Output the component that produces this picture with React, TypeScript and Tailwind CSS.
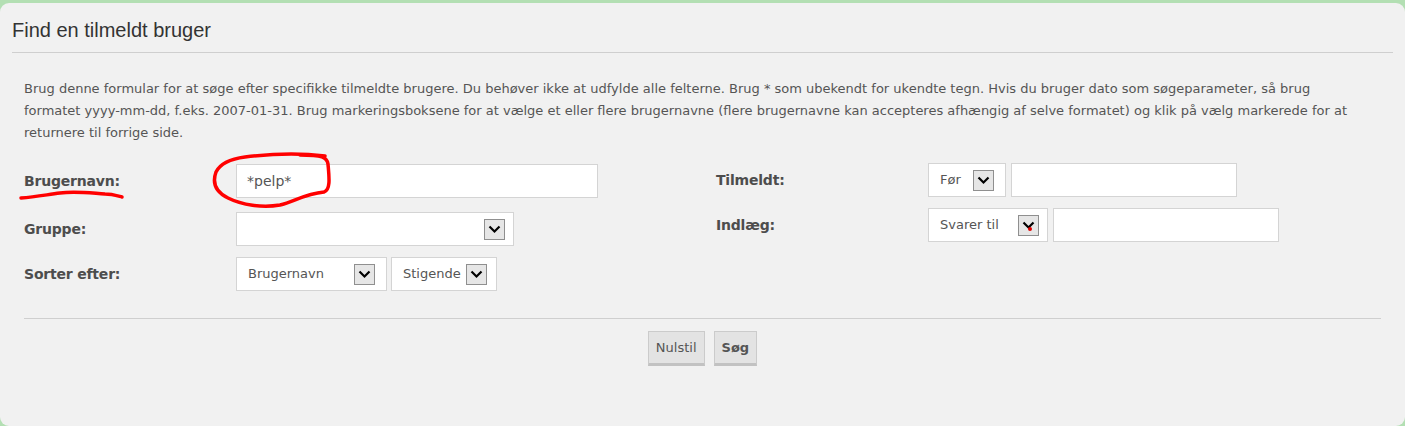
import React from "react";

const Chevron: React.FC<{ dot?: boolean }> = ({ dot }) => (
  <span className="relative flex h-[21px] w-[21px] items-center justify-center border border-[#8f8f8f] bg-[#e6e6e6]">
    <svg width="13" height="9" viewBox="0 0 13 9">
      <polyline points="1.5,1.5 6.5,6.5 11.5,1.5" fill="none" stroke="#000" strokeWidth="2.2" />
    </svg>
    {dot && <span className="absolute left-[9px] top-[11px] h-[4px] w-[4px] rounded-full bg-[#e00000]" />}
  </span>
);

const Select: React.FC<{ value: string; width: string; dot?: boolean; pr?: string }> = ({
  value,
  width,
  dot,
  pr = "pr-[11px]",
}) => (
  <div className={`flex h-[34px] items-center justify-between border border-[#d4d4d4] bg-white pl-[11px] ${pr} ${width}`}>
    <span>{value}</span>
    <Chevron dot={dot} />
  </div>
);

const Label: React.FC<{ children: React.ReactNode }> = ({ children }) => (
  <span className="w-[212px] shrink-0 text-[14px] font-bold tracking-[-0.2px] text-[#4d4d4d]">{children}</span>
);

export default function App() {
  return (
    <div
      className="relative h-[426px] w-full overflow-hidden bg-[#b3dfb3] pt-[3px] text-[13px] text-[#555]"
      style={{ fontFamily: '"DejaVu Sans", Verdana, sans-serif' }}
    >
      <div className="h-[423px] rounded-[9px] bg-[#f1f1f1] px-[12px]">
        <h1
          className="pt-[16px] pb-[10px] text-[20px] leading-[23px] text-[#333]"
          style={{ fontFamily: '"Liberation Sans", Arial, sans-serif' }}
        >
          Find en tilmeldt bruger
        </h1>
        <div className="border-t border-[#cfcfcf]" />

        <div className="px-[12px]">
          <p className="mt-[25px] whitespace-nowrap leading-[22px]">
            Brug denne formular for at søge efter specifikke tilmeldte brugere. Du behøver ikke at udfylde alle felterne.
            Brug * som ubekendt for ukendte tegn. Hvis du bruger dato som søgeparameter, så brug
            <br />
            formatet yyyy-mm-dd, f.eks. 2007-01-31. Brug markeringsboksene for at vælge et eller flere brugernavne (flere
            brugernavne kan accepteres afhængig af selve formatet) og klik på vælg markerede for at
            <br />
            returnere til forrige side.
          </p>

          <div className="mt-[20px] flex">
            {/* left column */}
            <div className="w-[692px] shrink-0">
              <div className="flex items-center">
                <Label>Brugernavn:</Label>
                <div className="flex h-[34px] w-[362px] items-center border border-[#d4d4d4] bg-white px-[10px] text-[14px]">
                  *pelp*
                </div>
              </div>
              <div className="mt-[14px] flex items-center">
                <Label>Gruppe:</Label>
                <Select value="" width="w-[278px]" pr="pr-[8px]" />
              </div>
              <div className="mt-[11px] flex items-center">
                <Label>Sorter efter:</Label>
                <div className="flex gap-[4px]">
                  <Select value="Brugernavn" width="w-[151px]" />
                  <Select value="Stigende" width="w-[106px]" pr="pr-[9px]" />
                </div>
              </div>
            </div>

            {/* right column */}
            <div className="-mt-[1px]">
              <div className="flex items-center">
                <Label>Tilmeldt:</Label>
                <div className="flex gap-[5px]">
                  <Select value="Før" width="w-[78px]" />
                  <div className="h-[34px] w-[226px] border border-[#d4d4d4] bg-white" />
                </div>
              </div>
              <div className="mt-[11px] flex items-center">
                <Label>Indlæg:</Label>
                <div className="flex gap-[5px]">
                  <Select value="Svarer til" width="w-[120px]" pr="pr-[8px]" dot />
                  <div className="h-[34px] w-[226px] border border-[#d4d4d4] bg-white" />
                </div>
              </div>
            </div>
          </div>

          <div className="mt-[27px] border-t border-[#cfcfcf]" />
          <div className="mt-[12px] flex justify-center gap-[9px]">
            <button className="h-[35px] border border-[#cbcbcb] border-b-[3px] border-b-[#c2c2c2] bg-[#e3e3e3] px-[7px] text-[#555]">
              Nulstil
            </button>
            <button className="h-[35px] border border-[#cbcbcb] border-b-[3px] border-b-[#c2c2c2] bg-[#e3e3e3] px-[7px] font-bold text-[#555]">
              Søg
            </button>
          </div>
        </div>
      </div>

      {/* red hand-drawn annotations */}
      <svg className="pointer-events-none absolute left-0 top-0" width="1405" height="426">
        <path
          d="M325 156 C300 153 270 154 245 157 C230 159 220 164 216 172 C212 183 216 192 228 198 C242 205 262 208 280 205 C295 201 305 194 324 192 C331 190 329 176 328 164 C327 157 322 155 300 155"
          fill="none"
          stroke="#ff0000"
          strokeWidth="3.5"
          strokeLinecap="round"
        />
        <path
          d="M21 198 C35 197 45 195 60 193 C75 191 90 193 105 194 C112 194 118 196 122 197"
          fill="none"
          stroke="#ff0000"
          strokeWidth="3.5"
          strokeLinecap="round"
        />
      </svg>
    </div>
  );
}
